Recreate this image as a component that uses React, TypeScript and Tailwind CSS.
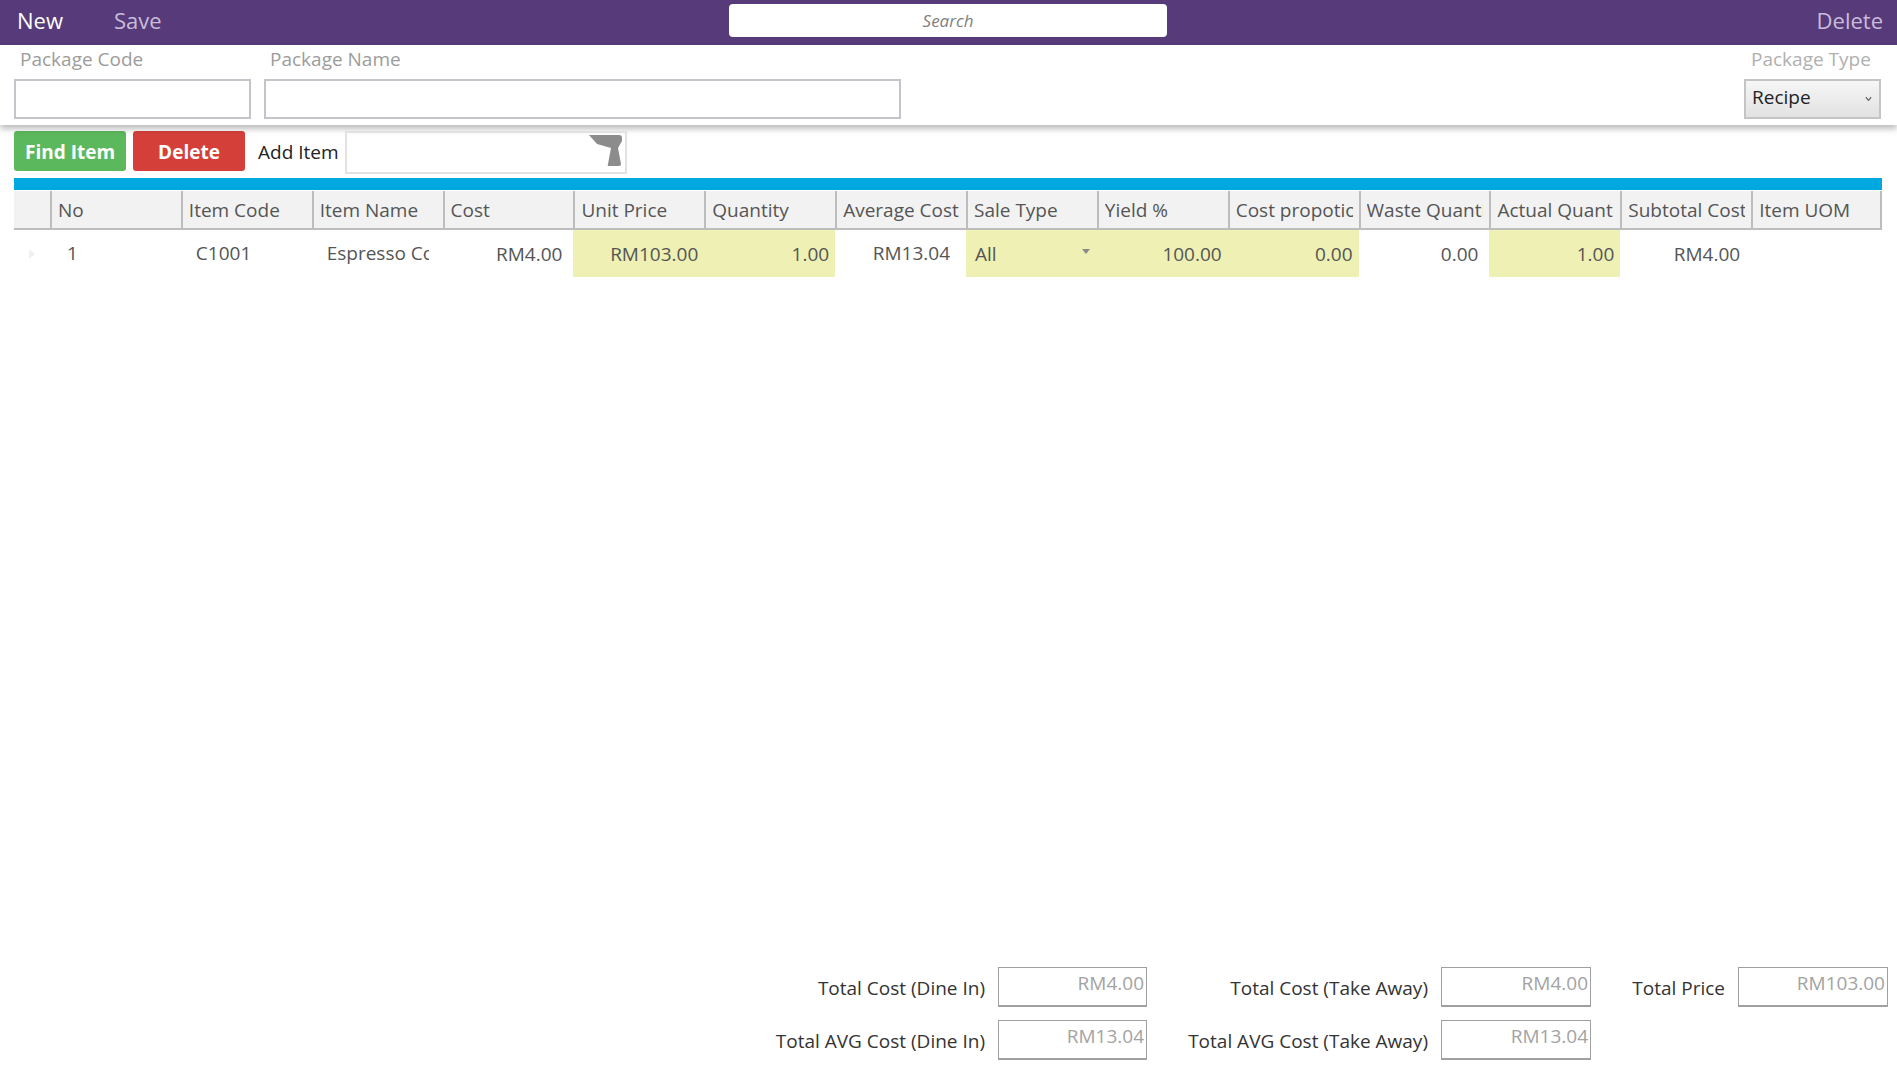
const columns = [
  "",
  "No",
  "Item Code",
  "Item Name",
  "Cost",
  "Unit Price",
  "Quantity",
  "Average Cost",
  "Sale Type",
  "Yield %",
  "Cost propotion",
  "Waste Quantity",
  "Actual Quantity",
  "Subtotal Cost",
  "Item UOM",
];

const GunIcon = () => (
  <svg viewBox="0 0 33 31" className="w-[33px] h-[31px] absolute right-[3px] top-[2px]">
    <path
      d="M0 0 H30 Q33 0 33 3 V6 L29 13 L32 29 Q32 31 30 31 H20 Q18 31 19 29 L22 13 L8 9 Z"
      fill="#8c8c8c"
    />
  </svg>
);

const Cell = ({
  children,
  className = "",
}: {
  children?: React.ReactNode;
  className?: string;
}) => (
  <div className={`flex items-center whitespace-nowrap overflow-hidden ${className}`}>
    {children}
  </div>
);

const TotalBox = ({ label, value }: { label: string; value: string }) => (
  <>
    <div className="text-[19px] text-[#333] text-right pt-[7px] whitespace-nowrap">{label}</div>
    <div className="h-[40px] border border-[#a0a0a0] border-b-2 text-[19px] text-[#a3a3a3] text-right leading-[30px] pr-[2px]">
      {value}
    </div>
  </>
);

export default function App() {
  return (
    <div
      className="h-screen flex flex-col overflow-hidden bg-white"
      style={{ fontFamily: '"Open Sans", "Noto Sans", sans-serif' }}
    >
      <header className="h-[45px] shrink-0 bg-[#563a79] flex items-center relative px-[17px] pb-[5px] text-[22px]">
        <span className="text-white">New</span>
        <span className="text-[#c9bcd9] ml-[51px]">Save</span>
        <div className="absolute left-[729px] top-[4px] w-[438px] h-[33px] bg-white rounded-[4px] flex items-center justify-center italic text-[17px] text-[#808080]">
          Search
        </div>
        <span className="ml-auto mr-[-3px] text-[#c9bcd9]">Delete</span>
      </header>

      <section className="h-[80px] shrink-0 flex px-[14px] shadow-[0_4px_6px_rgba(0,0,0,0.26)] relative text-[19px] text-[#9c9c9c]">
        <div className="w-[237px]">
          <div className="pl-[6px] h-[34px] leading-[28px]">Package Code</div>
          <div className="h-[40px] border-2 border-[#c4c4cc]" />
        </div>
        <div className="w-[637px] ml-[13px]">
          <div className="pl-[6px] h-[34px] leading-[28px]">Package Name</div>
          <div className="h-[40px] border-2 border-[#c4c4cc]" />
        </div>
        <div className="w-[137px] ml-auto mr-[2px]">
          <div className="pl-[7px] h-[34px] leading-[28px] text-[#b0b0b0] whitespace-nowrap">Package Type</div>
          <div className="h-[40px] border-2 border-[#c4c4c4] bg-gradient-to-b from-[#f6f6f6] to-[#e2e2e2] flex items-center justify-between pl-[6px] pr-[7px] text-[19px] text-[#222]">
            <span className="-mt-[3px]">Recipe</span>
            <svg viewBox="0 0 8 6" className="w-[7px] h-[6px]">
              <path d="M1 1 L4 4.5 L7 1" fill="none" stroke="#666" strokeWidth="1.4" />
            </svg>
          </div>
        </div>
      </section>

      <div className="flex-1 flex flex-col px-[14px] pr-[15px] pt-[6px] min-h-0">
        <div className="flex items-start h-[43px] shrink-0">
          <button className="w-[112px] h-[40px] pt-[2px] bg-[#5cb85c] rounded-[3px] text-white font-bold text-[19px]">
            Find Item
          </button>
          <button className="w-[112px] h-[40px] pt-[2px] bg-[#d43f3a] rounded-[3px] text-white font-bold text-[19px] ml-[7px]">
            Delete
          </button>
          <span className="w-[81px] text-[19px] text-[#222] ml-[13px] leading-[43px] whitespace-nowrap">Add Item</span>
          <div className="relative w-[282px] h-[43px] border-2 border-[#e2e2e2] ml-[6px]">
            <GunIcon />
          </div>
        </div>

        <div className="h-[12px] mt-[4px] bg-[#00a8e0] shrink-0" />

        <div className="grid grid-cols-[36px_repeat(14,1fr)] h-[39px] mt-[1px] shrink-0 bg-[#f2f2f2] border-b-2 border-[#bdbdbd] text-[19px] text-[#555]">
          {columns.map((c, i) => (
            <Cell
              key={c || "blank"}
              className={`pl-[6px] pr-[6px] pt-[1px] ${i > 0 ? "border-l-2 border-[#bdbdbd]" : ""} ${
                i === columns.length - 1 ? "border-r-2" : ""
              }`}
            >
              <span className="overflow-hidden">{c}</span>
            </Cell>
          ))}
        </div>

        <div className="grid grid-cols-[36px_repeat(14,1fr)] h-[47px] shrink-0 text-[19px] text-[#555]">
          <Cell className="justify-center">
            <svg viewBox="0 0 6 10" className="w-[6px] h-[10px]">
              <path d="M0 0 L6 5 L0 10 Z" fill="#f0f0f0" />
            </svg>
          </Cell>
          <Cell className="pl-[17px] pb-[1px]">1</Cell>
          <Cell className="pl-[15px] pb-[1px]">C1001</Cell>
          <Cell className="pl-[15px] pb-[1px] mr-[14px]">Espresso Coffee</Cell>
          <Cell className="justify-end pr-[11px] pt-[2px]">RM4.00</Cell>
          <Cell className="justify-end pr-[6px] pt-[2px] bg-[#eef0b4]">RM103.00</Cell>
          <Cell className="justify-end pr-[6px] pt-[2px] bg-[#eef0b4]">1.00</Cell>
          <Cell className="justify-end pr-[16px] pb-[1px]">RM13.04</Cell>
          <Cell className="justify-between pl-[9px] pr-[7px] pt-[2px] bg-[#eef0b4]">
            All
            <svg viewBox="0 0 8 5" className="w-[8px] h-[5px] mb-[6px]">
              <path d="M0 0 H8 L4 5 Z" fill="#8a8a8a" />
            </svg>
          </Cell>
          <Cell className="justify-end pr-[6px] pt-[2px] bg-[#eef0b4]">100.00</Cell>
          <Cell className="justify-end pr-[6px] pt-[2px] bg-[#eef0b4]">0.00</Cell>
          <Cell className="justify-end pr-[11px] pt-[2px]">0.00</Cell>
          <Cell className="justify-end pr-[6px] pt-[2px] bg-[#eef0b4]">1.00</Cell>
          <Cell className="justify-end pr-[11px] pt-[2px]">RM4.00</Cell>
          <Cell />
        </div>

        <div className="flex-1" />
      </div>

      <footer className="shrink-0 flex justify-end pr-[9px] pb-[8px]">
        <div className="grid grid-cols-[auto_149px_268px_150px_121px_150px] gap-x-[13px] gap-y-[13px]">
          <TotalBox label="Total Cost (Dine In)" value="RM4.00" />
          <TotalBox label="Total Cost (Take Away)" value="RM4.00" />
          <TotalBox label="Total Price" value="RM103.00" />
          <TotalBox label="Total AVG Cost (Dine In)" value="RM13.04" />
          <TotalBox label="Total AVG Cost (Take Away)" value="RM13.04" />
        </div>
      </footer>
    </div>
  );
}
